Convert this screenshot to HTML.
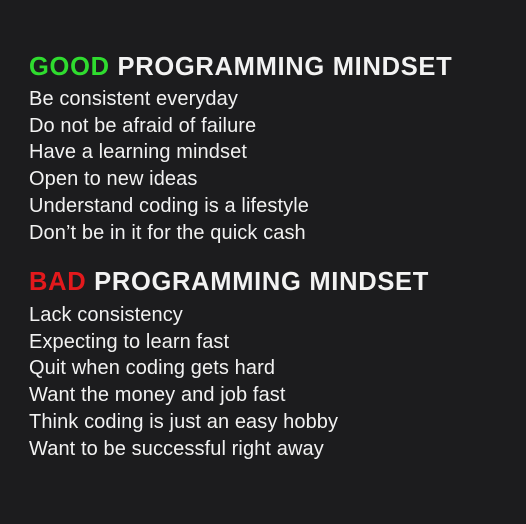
<!DOCTYPE html>
<html><head><style>
html,body{margin:0;padding:0;background:#1c1c1e;width:526px;height:524px;overflow:hidden}
.t{position:absolute;left:29px;font-family:"Liberation Sans",sans-serif;color:#f2f2f2;white-space:nowrap}
.h{font-weight:bold;font-size:25.5px;line-height:30px;letter-spacing:0.7px}
.b{font-size:20px;line-height:26.7px;font-weight:normal;letter-spacing:0.1px}
.g{color:#2fdc2f}.r{color:#e3191c}
</style></head><body>
<div class="t h" style="top:52px"><span class="g">GOOD</span> PROGRAMMING MINDSET</div>
<div class="t b" style="top:86px">Be consistent everyday<br>Do not be afraid of failure<br>Have a learning mindset<br>Open to new ideas<br>Understand coding is a lifestyle<br>Don’t be in it for the quick cash</div>
<div class="t h" style="top:267px"><span class="r">BAD</span> PROGRAMMING MINDSET</div>
<div class="t b" style="top:302px">Lack consistency<br>Expecting to learn fast<br>Quit when coding gets hard<br>Want the money and job fast<br>Think coding is just an easy hobby<br>Want to be successful right away</div>
</body></html>
